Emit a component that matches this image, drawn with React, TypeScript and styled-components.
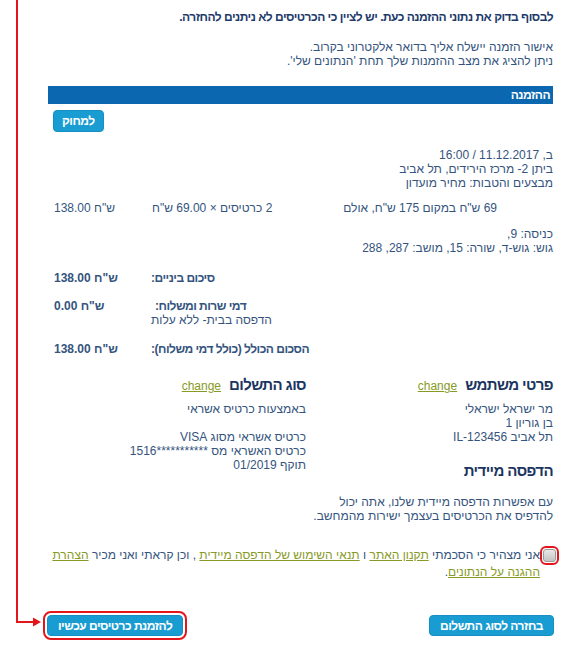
import React from "react";
import styled, { createGlobalStyle } from "styled-components";

const Global = createGlobalStyle`
  html, body { margin: 0; padding: 0; background: #ffffff; }
  body {
    font-family: "Liberation Sans", Arial, "Noto Sans", sans-serif;
    font-size: 12px;
    color: #34547e;
  }
  #root { width: 566px; }
`;

const Page = styled.div`
  position: relative;
  width: 566px;
  height: 646px;
  box-sizing: border-box;
  padding: 10px 13px 0 48px;
  direction: rtl;
  overflow: hidden;
  line-height: 14px;
`;

const Intro = styled.p`
  margin: 0;
  font-weight: bold;
  letter-spacing: -0.5px;
  color: #1d3a6b;
`;

const Note = styled.p`
  margin: 16px 0 0;
`;

const SectionBar = styled.div`
  margin-top: 18px;
  height: 18px;
  line-height: 18px;
  padding-right: 3px;
  background: #0a67b0;
  color: #ffffff;
  font-weight: bold;
  letter-spacing: -0.5px;
`;

const Section = styled.div`
  padding-left: 5px;
`;

const ToolRow = styled.div`
  display: flex;
  justify-content: flex-end;
  margin-top: 6px;
`;

const Button = styled.button<{ $tall?: boolean; $marked?: boolean }>`
  height: ${(p) => (p.$tall ? 22 : 21)}px;
  padding: 0 ${(p) => (p.$tall ? 8 : 10)}px;
  border: 1px solid #1690c3;
  border-radius: 4px;
  background: #199cd1;
  color: #ffffff;
  font-family: inherit;
  font-size: 12px;
  font-weight: bold;
  letter-spacing: -0.5px;
  line-height: 1;
  cursor: pointer;
  outline: ${(p) => (p.$marked ? "2px solid #e3161c" : "none")};
  outline-offset: 2px;
`;

const Lines = styled.div<{ $gap?: number }>`
  margin-top: ${(p) => p.$gap ?? 0}px;
`;

const TicketRow = styled.div`
  display: grid;
  grid-template-columns: 268px 134px 1fr;
  margin-top: 11px;
`;

const TicketDesc = styled.div`
  padding-right: 56px;
`;

const TicketQty = styled.div`
  text-align: left;
  padding-left: 1px;
`;

const Money = styled.div<{ $bold?: boolean }>`
  direction: ltr;
  text-align: left;
  width: 97px;
  padding-left: 1px;
  flex: none;
  font-weight: ${(p) => (p.$bold ? "bold" : "normal")};
`;

const TotalRow = styled.div<{ $gap: number }>`
  display: flex;
  justify-content: flex-end;
  margin-top: ${(p) => p.$gap}px;
`;

const TotalLabel = styled.div`
  text-align: left;
`;

const StrongLine = styled.div<{ $indent?: number }>`
  font-weight: bold;
  letter-spacing: -0.5px;
  padding-left: ${(p) => p.$indent ?? 0}px;
`;

const Details = styled.div`
  display: grid;
  grid-template-columns: 247px 1fr;
  margin-top: 20px;
`;

const Column = styled.div``;

const HeadingRow = styled.div<{ $gap?: number }>`
  display: flex;
  align-items: baseline;
  gap: 8px;
  margin-top: ${(p) => p.$gap ?? 0}px;
`;

const Heading = styled.h3`
  margin: 0;
  font-size: 15px;
  line-height: 18px;
  font-weight: bold;
  letter-spacing: -0.6px;
  color: #1b3560;
`;

const ChangeLink = styled.a`
  font-size: 12px;
  color: #879a26;
  text-decoration: underline;
  cursor: pointer;
`;

const Consent = styled.div`
  display: flex;
  align-items: flex-start;
  margin-top: 24px;
  line-height: 17px;
`;

const CheckBox = styled.span`
  flex: none;
  width: 11px;
  height: 11px;
  margin: 2px -3px 0 3px;
  border: 1px solid #9a9a9a;
  border-radius: 3px;
  background: linear-gradient(#e8e8e8, #c4c4c4);
  outline: 2px solid #e3161c;
  outline-offset: 1px;
`;

const ConsentText = styled.div`
  flex: 1;
`;

const TermsLink = styled.a`
  color: #879a26;
  text-decoration: underline;
  cursor: pointer;
`;

const ActionRow = styled.div`
  display: flex;
  justify-content: space-between;
  margin: 34px -1px 0 -1px;
`;

const Annotation = styled.svg`
  position: absolute;
  left: 0;
  top: 0;
  pointer-events: none;
`;

export default function App() {
  return (
    <>
      <Global />
      <Page>
        <Annotation width="48" height="646" viewBox="0 0 48 646">
          <rect x="16" y="0" width="2" height="623" fill="#e3161c" />
          <rect x="16" y="621" width="19" height="2" fill="#e3161c" />
          <polygon points="33,617.5 41,622 33,626.5" fill="#e3161c" />
        </Annotation>

        <Intro>לבסוף בדוק את נתוני ההזמנה כעת. יש לציין כי הכרטיסים לא ניתנים להחזרה.</Intro>
        <Note>
          אישור הזמנה יישלח אליך בדואר אלקטרוני בקרוב.
          <br />
          ניתן להציג את מצב ההזמנות שלך תחת 'הנתונים שלי'.
        </Note>

        <SectionBar>ההזמנה</SectionBar>
        <Section>
          <ToolRow>
            <Button $tall>למחוק</Button>
          </ToolRow>

          <Lines $gap={16}>
            <div>ב, 11.12.2017 / 16:00</div>
            <div>ביתן 2- מרכז הירידים, תל אביב</div>
            <div>מבצעים והטבות: מחיר מועדון</div>
          </Lines>

          <TicketRow>
            <TicketDesc>69 ש"ח במקום 175 ש"ח, אולם</TicketDesc>
            <TicketQty>2 כרטיסים × 69.00 ש"ח</TicketQty>
            <Money>138.00 ש"ח</Money>
          </TicketRow>

          <Lines $gap={12}>
            <div>כניסה: 9,</div>
            <div>גוש: גוש-ד, שורה: 15, מושב: 287, 288</div>
          </Lines>

          <TotalRow $gap={16}>
            <TotalLabel>
              <StrongLine>סיכום ביניים:</StrongLine>
            </TotalLabel>
            <Money $bold>138.00 ש"ח</Money>
          </TotalRow>

          <TotalRow $gap={14}>
            <TotalLabel>
              <StrongLine $indent={4}>דמי שרות ומשלוח:</StrongLine>
              <div>הדפסה בבית- ללא עלות</div>
            </TotalLabel>
            <Money $bold>0.00 ש"ח</Money>
          </TotalRow>

          <TotalRow $gap={15}>
            <TotalLabel>
              <StrongLine>הסכום הכולל (כולל דמי משלוח):</StrongLine>
            </TotalLabel>
            <Money $bold>138.00 ש"ח</Money>
          </TotalRow>
        </Section>

        <Details>
          <Column>
            <HeadingRow>
              <Heading>פרטי משתמש</Heading>
              <ChangeLink>change</ChangeLink>
            </HeadingRow>
            <Lines $gap={8}>
              <div>מר ישראל ישראלי</div>
              <div>בן גוריון 1</div>
              <div>תל אביב IL-123456</div>
            </Lines>
            <HeadingRow $gap={18}>
              <Heading>הדפסה מיידית</Heading>
            </HeadingRow>
            <Lines $gap={15}>
              <div>עם אפשרות הדפסה מיידית שלנו, אתה יכול</div>
              <div>להדפיס את הכרטיסים בעצמך ישירות מהמחשב.</div>
            </Lines>
          </Column>
          <Column>
            <HeadingRow>
              <Heading>סוג התשלום</Heading>
              <ChangeLink>change</ChangeLink>
            </HeadingRow>
            <Lines $gap={8}>
              <div>באמצעות כרטיס אשראי</div>
              <br />
              <div>כרטיס אשראי מסוג VISA</div>
              <div>כרטיס האשראי מס ***********1516</div>
              <div>תוקף 01/2019</div>
            </Lines>
          </Column>
        </Details>

        <Consent>
          <CheckBox />
          <ConsentText>
            אני מצהיר כי הסכמתי <TermsLink>תקנון האתר</TermsLink> ו{" "}
            <TermsLink>תנאי השימוש של הדפסה מיידית</TermsLink> , וכן קראתי ואני מכיר{" "}
            <TermsLink>הצהרת ההגנה על הנתונים</TermsLink>.
          </ConsentText>
        </Consent>

        <ActionRow>
          <Button>בחזרה לסוג התשלום</Button>
          <Button $marked>להזמנת כרטיסים עכשיו</Button>
        </ActionRow>
      </Page>
    </>
  );
}
